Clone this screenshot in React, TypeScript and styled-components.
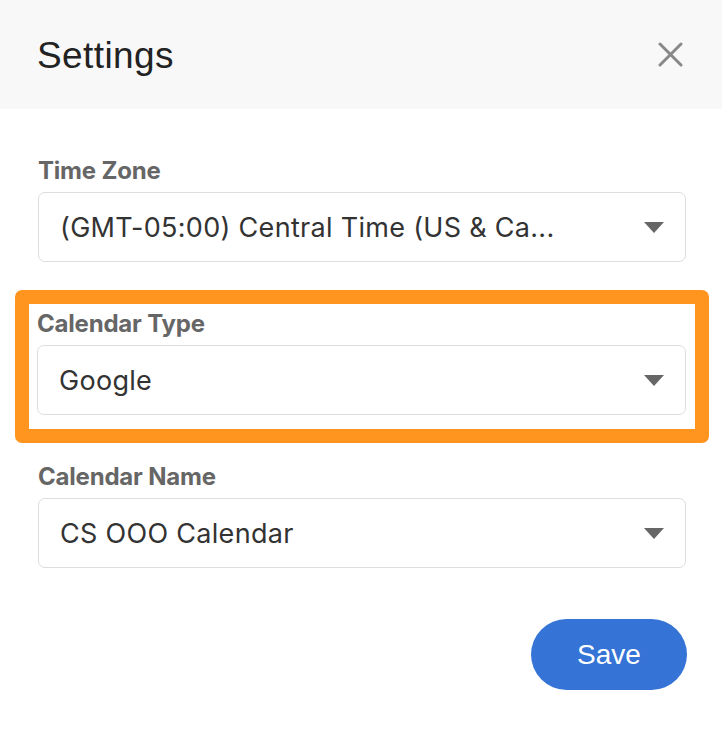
import styled, { createGlobalStyle } from "styled-components";

const GlobalStyle = createGlobalStyle`
  html, body {
    margin: 0;
    padding: 0;
    background: #ffffff;
  }
  body {
    font-family: Inter, "Noto Sans", sans-serif;
    -webkit-font-smoothing: antialiased;
  }
`;

const Panel = styled.div`
  width: 722px;
  height: 730px;
  background: #ffffff;
  display: flex;
  flex-direction: column;
`;

const Header = styled.header`
  height: 109px;
  background: #f8f8f8;
  display: flex;
  align-items: center;
  justify-content: space-between;
  padding: 0 39px 0 37px;
  box-sizing: border-box;
`;

const Title = styled.h1`
  margin: 0;
  font-family: "Liberation Sans", Arial, sans-serif;
  font-weight: 400;
  font-size: 37px;
  letter-spacing: 0.4px;
  color: #222222;
  padding-top: 2px;
`;

const CloseButton = styled.button`
  border: 0;
  background: none;
  padding: 0;
  width: 25px;
  height: 25px;
  display: flex;
  cursor: pointer;
`;

const Form = styled.form`
  display: flex;
  flex-direction: column;
  gap: 47px;
  padding: 47px 36px 0 38px;
`;

const Field = styled.div`
  display: flex;
  flex-direction: column;
  gap: 6px;
`;

const Highlight = styled.div`
  border: 14px solid #ff951e;
  border-radius: 7px;
  margin: -19px -23px -28px;
  padding: 5px 9px 14px 8px;
  background: #ffffff;
`;

const Label = styled.label`
  font-size: 24px;
  line-height: 30px;
  font-weight: 700;
  color: #666666;
  letter-spacing: -0.2px;
`;

const Select = styled.div`
  height: 70px;
  box-sizing: border-box;
  border: 1.5px solid #dddddd;
  border-radius: 7px;
  display: flex;
  align-items: center;
  justify-content: space-between;
  padding: 0 21px 0 21px;
  font-size: 27px;
  letter-spacing: 0.3px;
  color: #333333;
  cursor: pointer;
`;

const Value = styled.span`
  white-space: nowrap;
  overflow: hidden;
  text-overflow: ellipsis;
`;

const Footer = styled.div`
  display: flex;
  justify-content: flex-end;
  padding: 51px 35px 0 0;
`;

const SaveButton = styled.button`
  width: 156px;
  height: 71px;
  border: 0;
  border-radius: 36px;
  background: #3574d6;
  color: #ffffff;
  font-family: "Liberation Sans", Arial, sans-serif;
  font-size: 28px;
  cursor: pointer;
`;

const Caret = () => (
  <svg width="20" height="11" viewBox="0 0 20 11">
    <path d="M0 0h20L10 11z" fill="#666666" />
  </svg>
);

const CloseIcon = () => (
  <svg width="25" height="25" viewBox="0 0 25 25">
    <path
      d="M2 2L23 23M23 2L2 23"
      stroke="#888888"
      strokeWidth="3"
      strokeLinecap="round"
    />
  </svg>
);

const SelectField = ({ label, value }: { label: string; value: string }) => (
  <Field>
    <Label>{label}</Label>
    <Select>
      <Value>{value}</Value>
      <Caret />
    </Select>
  </Field>
);

export default function App() {
  return (
    <>
      <GlobalStyle />
      <Panel>
        <Header>
          <Title>Settings</Title>
          <CloseButton aria-label="Close">
            <CloseIcon />
          </CloseButton>
        </Header>
        <Form>
          <SelectField label="Time Zone" value="(GMT-05:00) Central Time (US & Ca..." />
          <Highlight>
            <SelectField label="Calendar Type" value="Google" />
          </Highlight>
          <SelectField label="Calendar Name" value="CS OOO Calendar" />
        </Form>
        <Footer>
          <SaveButton>Save</SaveButton>
        </Footer>
      </Panel>
    </>
  );
}
